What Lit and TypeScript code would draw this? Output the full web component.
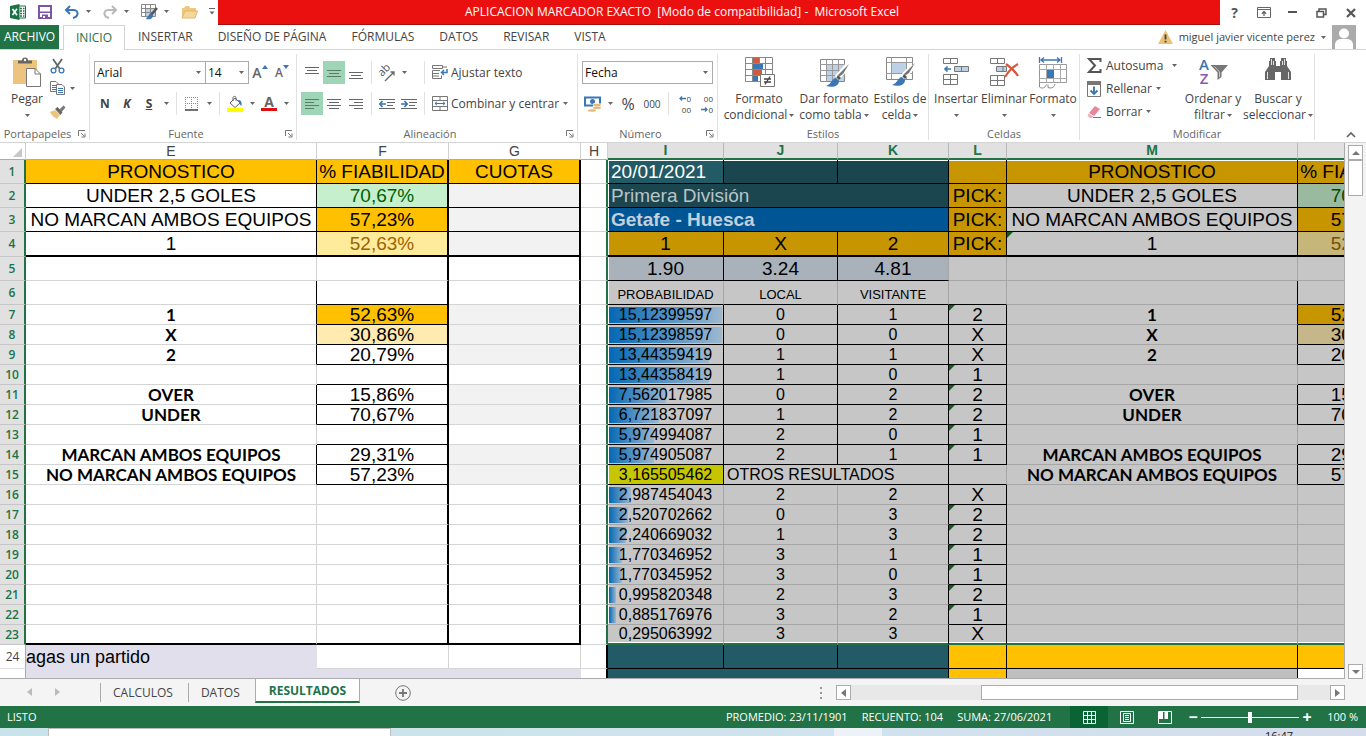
import { LitElement, html, css, svg, nothing, TemplateResult } from "lit";
import { customElement, state } from "lit/decorators.js";
import { classMap } from "lit/directives/class-map.js";
import { styleMap } from "lit/directives/style-map.js";

/* ---------- icons ---------- */
const icon = (w: number, h: number, body: unknown) =>
  html`<svg width=${w} height=${h} viewBox="0 0 ${w} ${h}" aria-hidden="true">${body}</svg>`;

const caret = icon(5, 3, svg`<path d="M0 0H5L2.5 3Z" fill="#666"/>`);

const icons = {
  excel: icon(18, 18, svg`<path d="M9 3H16.5V15H9" fill="#fff" stroke="#1e7145"/><path d="M11 5.500h2M14 5.500h1.500M11 8h2M14 8h1.500M11 10.500h2M14 10.500h1.500M11 13h2M14 13h1.500" stroke="#1e7145" stroke-width="1.400"/><path d="M1 3L10.500 1V17L1 15Z" fill="#1e7145"/><path d="M3.500 6L8 12.300M8 5.700L3.500 12" stroke="#fff" stroke-width="1.700"/>`),
  save: icon(14, 14, svg`<path d="M1 1H13V13H1Z" fill="#fff" stroke="#7f54a8" stroke-width="2"/><path d="M2 6.500H12V8H2Z" fill="#7f54a8"/><path d="M4 9.500H10V13H4Z" fill="#7f54a8"/><path d="M5 11H7V13H5Z" fill="#fff"/>`),
  undo: icon(16, 14, svg`<path d="M6 1L2 5L6 9M2.500 5H9.500C13 5 14 7.500 13.500 9.300C13 11.500 11.500 12.500 9 13" fill="none" stroke="#3b76b5" stroke-width="2"/>`),
  redo: icon(16, 14, svg`<path d="M10 1L14 5L10 9M13.500 5H6.500C3 5 2 7.500 2.500 9.300C3 11.500 4.500 12.500 7 13" fill="none" stroke="#b8b8b8" stroke-width="2"/>`),
  tableBrush: icon(18, 18, svg`<path d="M1.500 1.500H15.500V13.500H1.500Z" fill="#fff" stroke="#888"/><path d="M6 5H15V13H6Z" fill="#bcd0e6"/><path d="M1 5.500H16M1 9.500H16M5.500 1V14M10.500 1V14" stroke="#888"/><path d="M17 5L11 12" stroke="#555" stroke-width="2.500"/><path d="M11 10.500C8 11 9 14 5.500 16C9 17 13 16 13 12.500Z" fill="#3b76b5"/>`),
  folder: icon(17, 14, svg`<path d="M1 13V3H3L4.500 1H8L9 3H15V6" fill="#edc87e"/><path d="M1 13L4 6H16.500L14 13Z" fill="#f3d79c" stroke="#e3b767"/>`),
  customize: icon(6, 7, svg`<path d="M0 .5H6" stroke="#666"/><path d="M.5 3.500H5.500L3 6.500Z" fill="#666"/>`),
  ribbonOpts: icon(14, 11, svg`<path d="M.5 .5H13.500V10.500H.5ZM.5 2.500H13.500" fill="none" stroke="#666"/><path d="M7 9V5M4.800 6.700L7 4.500L9.200 6.700" fill="none" stroke="#666" stroke-width="1.300"/>`),
  minimize: icon(9, 3, svg`<path d="M0 1H9" stroke="#555" stroke-width="2"/>`),
  restore: icon(11, 10, svg`<path d="M3 3V1H10V6.500H8" fill="none" stroke="#555" stroke-width="1.500"/><path d="M1 3.500H7.500V9H1Z" fill="none" stroke="#555" stroke-width="1.500"/>`),
  close: icon(10, 10, svg`<path d="M1 1L9 9M9 1L1 9" stroke="#555" stroke-width="2.200"/>`),
  warn: icon(15, 14, svg`<path d="M7.500 0L15 14H0Z" fill="#ecc27a"/><path d="M7.500 4.500V9.500M7.500 10.800V12.500" stroke="#444" stroke-width="1.800"/>`),
  avatar: icon(24, 24, svg`<path d="M0 0H24V24H0Z" fill="#ababab"/><circle cx="12" cy="8.500" r="5" fill="#fff"/><path d="M3 24V20C3 16 6 14 9 14H15C18 14 21 16 21 20V24Z" fill="#fff"/>`),
  paste: icon(30, 30, svg`<path d="M1 3H25V27H1Z" fill="#edc47d"/><path d="M6 6.500V3.500H10C10 1.500 11 .5 13 .5S16 1.500 16 3.500H20V6.500Z" fill="#666"/><circle cx="13" cy="3" r="1.200" fill="#fff"/><path d="M14.500 11.500H23L28.500 17V29.500H14.500Z" fill="#fff" stroke="#777"/><path d="M23 11.500V17H28.500" fill="none" stroke="#777"/>`),
  cut: icon(15, 16, svg`<path d="M3 1L9.500 10.500M12 1L5.500 10.500" stroke="#666" stroke-width="1.800"/><circle cx="3.500" cy="12.500" r="2.400" fill="none" stroke="#3b76b5" stroke-width="1.300"/><circle cx="11.500" cy="12.500" r="2.400" fill="none" stroke="#3b76b5" stroke-width="1.300"/>`),
  copy: icon(16, 15, svg`<path d="M.5 .5H6L8.500 3V10.500H.5Z" fill="#fff" stroke="#777"/><path d="M2 4.500H6M2 6.500H6M2 8.500H6" stroke="#3b76b5"/><path d="M6.500 3.500H12L14.500 6V13.500H6.500Z" fill="#fff" stroke="#777"/><path d="M8 7.500H13M8 9.500H13M8 11.500H13" stroke="#3b76b5"/>`),
  brush: icon(16, 14, svg`<path d="M0 7L5 5L10 10L7 14C5 13 1 10 0 7Z" fill="#edc47d"/><path d="M5 4L7.500 2L12.500 7L10.500 10Z" fill="#666"/><path d="M9.500 4.500L13.500 .5L15.500 2.500L12 6.500Z" fill="#777"/>`),
  border: icon(14, 14, svg`<path d="M.5 0V13M6.500 0V13M12.500 0V13M0 .5H13M0 6.500H13" stroke="#888" stroke-dasharray="1 1" fill="none"/><path d="M0 13H13" stroke="#444" stroke-width="1.500"/>`),
  fill: icon(18, 16, svg`<path d="M4 7L9 2L14 7L9 11.500Z" fill="#fff" stroke="#666"/><path d="M7 5V1.500C7 0 10 0 10 1.500V5" fill="none" stroke="#666"/><path d="M12 4C15 4 16 6 15.500 10L13.500 8Z" fill="#3b76b5"/><path d="M1 12H17V16H1Z" fill="#ffff00"/>`),
  vTop: icon(14, 12, svg`<path d="M0 .5H14M2 3.500H12M0 6.500H14" stroke="#666"/>`),
  vMid: icon(14, 12, svg`<path d="M0 3.500H14M2 6.500H12M0 9.500H14" stroke="#5c7a6a"/>`),
  vBot: icon(14, 12, svg`<path d="M0 5.500H14M2 8.500H12M0 11.500H14" stroke="#666"/>`),
  hLeft: icon(14, 12, svg`<path d="M0 1.500H14M0 4.500H9M0 7.500H14M0 10.500H9" stroke="#5c7a6a"/>`),
  hMid: icon(14, 12, svg`<path d="M0 1.500H14M2 4.500H12M0 7.500H14M2 10.500H12" stroke="#666"/>`),
  hRight: icon(14, 12, svg`<path d="M0 1.500H14M5 4.500H14M0 7.500H14M5 10.500H14" stroke="#666"/>`),
  orient: icon(20, 18, svg`<text transform="translate(5 13) rotate(-45)" font-size="11" fill="#555">ab</text><path d="M8 17L17 8M13.500 8H17V11.500" fill="none" stroke="#666" stroke-width="1.300"/>`),
  outdent: icon(16, 12, svg`<path d="M0 1.500H16M8 4.500H16M8 7.500H14M0 10.500H16" stroke="#666"/><path d="M7 6H1M3.500 3L.8 6L3.500 9" fill="none" stroke="#3b76b5" stroke-width="1.700"/>`),
  indent: icon(16, 12, svg`<path d="M0 1.500H16M8 4.500H16M8 7.500H14M0 10.500H16" stroke="#666"/><path d="M0 6H6M3.500 3L6.200 6L3.500 9" fill="none" stroke="#3b76b5" stroke-width="1.700"/>`),
  wrap: icon(16, 15, svg`<path d="M.5 .5H10.500V3.500H.5ZM.5 5.500H8M.5 5.500V13.500H9.500V10.500M.5 8.500H7M.5 11H7" fill="none" stroke="#777"/><path d="M10 2H15" stroke="#777"/><path d="M15 4V7.500H10M12 5L9.500 7.500L12 10" fill="none" stroke="#3b76b5" stroke-width="1.500"/>`),
  merge: icon(16, 15, svg`<path d="M.5 .5H15.500V14.500H.5ZM.5 4.500H15.500M.5 10.500H15.500M8 .5V4.500M8 10.500V14.500" fill="none" stroke="#777"/><path d="M3 7.500H13M5 5.800L3 7.500L5 9.200M11 5.800L13 7.500L11 9.200" fill="none" stroke="#3b76b5"/>`),
  arrowUp: icon(6, 4, svg`<path d="M0 4L3 0L6 4Z" fill="#3b76b5"/>`),
  arrowDown: icon(6, 4, svg`<path d="M0 0H6L3 4Z" fill="#3b76b5"/>`),
  currency: icon(18, 16, svg`<path d="M1 1.500H16V9.500H1Z" fill="#fff" stroke="#3b76b5" stroke-width="2"/><circle cx="8.500" cy="5.500" r="2.500" fill="#3b76b5"/><path d="M9 7.500H18V16H3V12H9Z" fill="#fff"/><ellipse cx="13" cy="9" rx="4" ry="1.200" fill="#e8b96f"/><ellipse cx="13" cy="11.700" rx="4" ry="1.200" fill="#e8b96f"/><ellipse cx="8" cy="14.500" rx="4" ry="1.200" fill="#e8b96f"/>`),
  arrowL: icon(7, 5, svg`<path d="M7 2.500H1M3 .5L1 2.500L3 4.500" fill="none" stroke="#3b76b5" stroke-width="1.300"/>`),
  arrowR: icon(7, 5, svg`<path d="M0 2.500H6M4 .5L6 2.500L4 4.500" fill="none" stroke="#3b76b5" stroke-width="1.300"/>`),
  cond: icon(31, 30, svg`<path d="M1.500 .5H28.500V24.500H1.500Z" fill="#fff" stroke="#888"/><path d="M9 1H15V6H9ZM9 13H18V18H9Z" fill="#d05a3c"/><path d="M9 7H19V12H9ZM9 19H14V24H9Z" fill="#3b76b5"/><path d="M1.500 6.500H28.500M1.500 12.500H28.500M1.500 18.500H28.500M8.500 .5V24.500M15.500 .5V6M21.500 .5V24" fill="none" stroke="#888"/><path d="M16.500 17.500H30.500V29.500H16.500Z" fill="#fff" stroke="#777"/><path d="M20 22H27M20 25H27M26 19.500L21 27.500" stroke="#444" stroke-width="1.300"/>`),
  asTable: icon(30, 30, svg`<path d="M1.500 2.500H25.500V24.500H1.500Z" fill="#fff" stroke="#888"/><path d="M8 8H25V24H8Z" fill="#bcd0e6"/><path d="M1 7.500H26M1 13.500H26M1 18.500H26M7.500 2V25M13.500 2V25M19.500 2V25" stroke="#999"/><path d="M28.500 9L18 21" stroke="#fff" stroke-width="6"/><path d="M30 7L24 17L20.500 19.500L19 18Z" fill="#777"/><path d="M19 18L22 21L20 23L17.500 20.500Z" fill="#555"/><path d="M17 21C13 21 13 27 7 29C14 31 20 29 20 24Z" fill="#3b76b5"/>`),
  cellStyle: icon(30, 30, svg`<path d="M1.500 .5H27.500V22.500H1.500Z" fill="#fff" stroke="#888"/><path d="M7 6H21V16H7Z" fill="#bcd0e6"/><path d="M1 5.500H28M1 16.500H28M6.500 .5V22M21.500 .5V22" stroke="#999"/><path d="M28.500 9L18 20" stroke="#fff" stroke-width="6"/><path d="M30 6L24 16L20.500 18.500L19 17Z" fill="#777"/><path d="M19 17L22 20L20 22L17.500 19.500Z" fill="#555"/><path d="M17 20C13 20 13 26 7 28C14 30 20 28 20 23Z" fill="#3b76b5"/>`),
  insertCell: icon(28, 30, svg`<path d="M1.500 1.500H15.500V6.500H1.500ZM8.500 1.500V6.500M1.500 17.500H15.500V27.500H1.500ZM1.500 22.500H15.500M8.500 17.500V27.500" fill="#fff" stroke="#777"/><path d="M12.500 9.500H26.500V14.500H12.500ZM19.500 9.500V14.500" fill="#bcd0e6" stroke="#777"/><path d="M9 12H3M5.500 9.500L3 12L5.500 14.500" fill="none" stroke="#3b76b5" stroke-width="1.700"/>`),
  deleteCell: icon(30, 30, svg`<path d="M1.500 1.500H15.500V6.500H1.500ZM8.500 1.500V6.500M1.500 18.500H15.500V28.500H1.500ZM1.500 23.500H15.500M8.500 18.500V28.500" fill="#fff" stroke="#777"/><path d="M7.500 9.500H17.500V14.500H7.500ZM14 9.500V14.500" fill="#bcd0e6" stroke="#777"/><path d="M17 7C21 10 26 14 29 19M29 7C24 10 19 15 16 20" fill="none" stroke="#d8583c" stroke-width="2.200"/>`),
  formatCell: icon(30, 32, svg`<path d="M1.500 0V6M23.500 0V6M3 3H22M6 .5L3 3L6 5.500M19 .5L22 3L19 5.500" fill="none" stroke="#3b76b5" stroke-width="1.300"/><path d="M1.500 7.500H28.500V25.500H1.500Z" fill="#fff" stroke="#999"/><path d="M1 12.500H29M1 21.500H29M8.500 7V26M15.500 7V26M22.500 7V26" stroke="#aaa"/><path d="M9 13H16V21H9Z" fill="#3b76b5"/><path d="M1.500 25.500V30C4 32 7 31 8.500 27.500M10 27.500V30.500C13 31.500 16 31 17 27" fill="none" stroke="#888"/>`),
  sigma: icon(15, 15, svg`<path d="M13.500 4V1H2L8 7.500L2 14H13.500V11" fill="none" stroke="#555" stroke-width="2"/>`),
  fillDown: icon(15, 16, svg`<path d="M.5 .5H13.500V15.500H.5Z" fill="#fff" stroke="#777"/><path d="M0 0H14V4H0Z" fill="#777"/><path d="M7 5.500V13M3.500 9.500L7 13L10.500 9.500" fill="none" stroke="#3b76b5" stroke-width="1.900"/>`),
  eraser: icon(15, 14, svg`<path d="M8 1L13 4L7 11L2 8Z" fill="#e8879b"/><path d="M1.500 8.500L6.500 11.500L5 13H3L.5 11Z" fill="#efb2bd"/><path d="M6 12.500H14" stroke="#777"/>`),
  sort: icon(30, 28, svg`<path d="M12.500 8H30L23.500 15.500V20L19.500 23V15.500Z" fill="#777"/><path d="M16.500 9.500L21.500 15V20" fill="none" stroke="#c4c4c4"/>`),
  find: icon(26, 24, svg`<path d="M5 1H10V4H11V9H15V4H16V1H21V4H22V9L26 15V23H16V15H10V23H0V15L4 9V4H5Z" fill="#666"/><path d="M6.500 2V8M8.500 4V8M17.500 4V8M19.500 2V8M2.500 15V22M23.500 15V22" stroke="#fff" stroke-width=".8"/>`),
  launcher: icon(8, 8, svg`<path d="M.5 6V.5H7" fill="none" stroke="#777"/><path d="M3 3L6 6M7 3.500V7H3.500" fill="none" stroke="#777"/>`),
  chevronUp: icon(10, 7, svg`<path d="M1 6L5 2L9 6" fill="none" stroke="#666" stroke-width="1.700"/>`),
  triL: icon(5, 8, svg`<path d="M5 0V8L0 4Z" fill="currentColor"/>`),
  triR: icon(5, 8, svg`<path d="M0 0V8L5 4Z" fill="currentColor"/>`),
  triU: icon(8, 4, svg`<path d="M0 4H8L4 0Z" fill="currentColor"/>`),
  triD: icon(8, 4, svg`<path d="M0 0H8L4 4Z" fill="currentColor"/>`),
  plus: icon(16, 16, svg`<circle cx="8" cy="8" r="7.300" fill="none" stroke="#777"/><path d="M8 4V12M4 8H12" stroke="#777" stroke-width="1.800"/>`),
  viewGrid: icon(13, 13, svg`<path d="M.5 .5H12.500V12.500H.5ZM.5 4.500H12.500M.5 8.500H12.500M4.500 .5V12.500M8.500 .5V12.500" fill="none" stroke="#fff"/>`),
  viewPage: icon(14, 13, svg`<path d="M.5 .5H13.500V12.500H.5ZM3.500 2.500H10.500V10.500H3.500ZM5 4.500H9M5 6.500H9M5 8.500H9" fill="none" stroke="#fff"/>`),
  viewBreak: icon(14, 13, svg`<path d="M.5 .5H13.500V12.500H.5Z" fill="none" stroke="#fff"/><path d="M1 1H5V8H1ZM6.500 1H10V8H6.500Z" fill="#fff"/>`),
};

/* ---------- sheet data ---------- */
interface Cell { t?: string; k?: string; span?: number; bar?: number; flag?: boolean }

const HEADS: [string, string][] = [
  ["E", ""], ["F", ""], ["G", ""], ["H", ""],
  ["I", "sel"], ["J", "sel"], ["K", "sel"], ["L", "sel"], ["M", "sel"], ["", "sel"],
];

const FORECAST: Record<number, [string, string, string, string]> = {
  1: ["PRONOSTICO", "% FIABILIDAD", "gold", "goldS"],
  2: ["UNDER 2,5 GOLES", "70,67%", "green", "greenS"],
  3: ["NO MARCAN AMBOS EQUIPOS", "57,23%", "gold", "goldS"],
  4: ["1", "52,63%", "amber", "amberS"],
  7: ["1", "52,63%", "gold", "goldS"],
  8: ["X", "30,86%", "cream", "creamS"],
  9: ["2", "20,79%", "", "s"],
  11: ["OVER", "15,86%", "", "s"],
  12: ["UNDER", "70,67%", "", "s"],
  14: ["MARCAN AMBOS EQUIPOS", "29,31%", "", "s"],
  15: ["NO MARCAN AMBOS EQUIPOS", "57,23%", "", "s"],
};

/* value, home goals, away goals, result, error flag */
const SCORES: Record<number, [string, string, string, string, boolean]> = {
  7: ["15,12399597", "0", "1", "2", true],
  8: ["15,12398597", "0", "0", "X", false],
  9: ["13,44359419", "1", "1", "X", false],
  10: ["13,44358419", "1", "0", "1", true],
  11: ["7,562017985", "0", "2", "2", true],
  12: ["6,721837097", "1", "2", "2", true],
  13: ["5,974994087", "2", "0", "1", true],
  14: ["5,974905087", "2", "1", "1", true],
  16: ["2,987454043", "2", "2", "X", false],
  17: ["2,520702662", "0", "3", "2", true],
  18: ["2,240669032", "1", "3", "2", true],
  19: ["1,770346952", "3", "1", "1", true],
  20: ["1,770345952", "3", "0", "1", true],
  21: ["0,995820348", "2", "3", "2", true],
  22: ["0,885176976", "3", "2", "1", true],
  23: ["0,295063992", "3", "3", "X", false],
};
const MAX = 15.12399597;

function labelPair(r: number, selected: boolean): Cell[] {
  const f = FORECAST[r];
  const head = r <= 4;
  const base = selected ? "s" : "";
  const last = r === 4 ? "bbt" : "bb";
  const side = head || f || r === 6 ? "br" : "";
  const labelKind = head ? (r === 1 ? (selected ? "goldS" : "gold") : base) : `${base} cal`;
  const nextBoxed = [6, 7, 8, 9, 10, 11, 12, 13, 14, 15].includes(r);
  return [
    { t: f?.[0], k: `${labelKind} ${side} ${head ? last : ""}`, flag: selected && r === 4 },
    { t: f?.[1], k: `${f ? f[selected ? 3 : 2] : base} ${head ? last : nextBoxed ? "bb" : ""} ${head ? "" : "low"} brt` },
  ];
}

function buildRow(r: number): Cell[] {
  if (r === 24) {
    return [
      { t: "agas un partido", k: "lilac" }, {}, {}, { k: "brt" },
      { k: "teal br bb" }, { k: "teal br bb" }, { k: "teal br bb" },
      { k: "gold br bb" }, { k: "gold br bb" }, { k: "gold br bb" },
    ];
  }
  if (r === 25) {
    return [{ k: "lilac", span: 3 }, { k: "brt" }, { k: "teal br", span: 3 }, { k: "gold br" }, { k: "silver br" }, {}];
  }
  const left = labelPair(r, false);
  const shaded = FORECAST[r] && r !== 1;
  const g: Cell = {
    t: r === 1 ? "CUOTAS" : undefined,
    k: `${r === 1 ? "gold" : shaded ? "pale" : ""} ${r < 4 ? "bb" : r === 4 ? "bbt" : ""} brt`,
  };
  const h: Cell = { k: "edge" };
  let mid: Cell[];
  if (r === 1) mid = [{ t: "20/01/2021", k: "active left br bb" }, { k: "tealS br bb" }, { k: "tealS br bb" }, { k: "goldS br bb" }];
  else if (r === 2) mid = [{ t: "Primera División", k: "tealS left br bb", span: 3 }, { t: "PICK:", k: "goldS br bb" }];
  else if (r === 3) mid = [{ t: "Getafe - Huesca", k: "blueS left br bb", span: 3 }, { t: "PICK:", k: "goldS br bb" }];
  else if (r === 4) mid = [..."1X2"].map((t): Cell => ({ t, k: "goldS br bbt" })).concat({ t: "PICK:", k: "goldS br bbt" });
  else if (r === 5) mid = [{ t: "1.90", k: "slate br bb" }, { t: "3.24", k: "slate br bb" }, { t: "4.81", k: "slate bb" }, { k: "s" }];
  else if (r === 6) mid = ["PROBABILIDAD", "LOCAL", "VISITANTE"].map((t): Cell => ({ t, k: "s small bb" })).concat({ k: "s bb" });
  else if (r === 15) mid = [{ t: "3,165505462", k: "lime mid br bb" }, { t: "OTROS RESULTADOS", k: "s mid left br bb", span: 2 }, { k: "s bb" }];
  else {
    const [v, a, b, res, flag] = SCORES[r];
    const edge = r < 15 ? "br bb" : "";
    mid = [
      { t: v, k: `s mid ${edge}`, bar: (parseFloat(v.replace(",", ".")) / MAX) * 100 },
      { t: a, k: `s mid ${edge}` }, { t: b, k: `s mid br ${edge}` },
      { t: res, k: "s low br bb", flag },
    ];
  }
  return [...left, g, h, ...mid, ...labelPair(r, true)];
}

const ROWS = Array.from({ length: 25 }, (_, i) => ({ n: i + 1, cells: buildRow(i + 1) }));

@customElement("app-root")
export class AppRoot extends LitElement {
  @state() private sheet = "RESULTADOS";

  static styles = css`
    :host { display: flex; flex-direction: column; height: 100vh; overflow: hidden; background: #fff; color: #444; font: 12px/16px "Open Sans", "Noto Sans", sans-serif; }
    * { box-sizing: border-box; }
    svg { display: block; flex: none; overflow: visible; }
    button, select { font: inherit; color: inherit; background: none; border: 0; padding: 0; margin: 0; }
    button { display: flex; align-items: center; justify-content: center; white-space: nowrap; }
    a { color: inherit; text-decoration: none; }

    .title { display: flex; height: 25px; flex: none; }
    .quick { display: flex; align-items: center; width: 218px; padding: 0 3px 2px 9px; justify-content: space-between; flex: none; }
    .quick .wide { gap: 6px; }
    .name { flex: 1; min-width: 0; background: #ea1010; border-bottom: 1px solid #a31010; color: #fff; display: flex; align-items: center; justify-content: center; padding-right: 74px; white-space: pre; }
    .name h1 { font: inherit; margin: 0; }
    .win { display: flex; align-items: center; width: 146px; flex: none; }
    .win button { width: 29px; height: 24px; }
    .help { font-size: 14px; font-weight: 700; color: #555; }

    .tabs { display: flex; height: 25px; flex: none; align-items: stretch; border-bottom: 1px solid #d4d4d4; }
    .tabs a { display: flex; align-items: center; padding: 0 12px 0 13px; white-space: nowrap; font-size: 12px; }
    .tabs .file { background: #217346; color: #fff; padding: 0; width: 59px; justify-content: center; margin-right: 4px; }
    .tabs .on { border: 1px solid #d4d4d4; border-bottom: 0; background: #fff; color: #217346; width: 62px; padding: 0; justify-content: center; height: 25px; }
    .user { margin-left: auto; display: flex; align-items: center; gap: 6px; padding-right: 10px; white-space: nowrap; font-size: 11px; }

    .ribbon { display: flex; height: 93px; flex: none; border-bottom: 1px solid #d4d4d4; }
    .group { display: flex; flex-direction: column; border-right: 1px solid #e1e1e1; margin: 4px 0 2px; flex: none; }
    .body { flex: 1; display: flex; }
    .foot { height: 12px; display: flex; align-items: center; color: #666; font-size: 11px; line-height: 12px; }
    .foot span { flex: 1; text-align: center; }
    .foot button { width: 14px; height: 12px; }
    .g1 { width: 90px; } .g2 { width: 207px; } .g3 { width: 281px; } .g4 { width: 140px; }
    .g5 { width: 211px; } .g6 { width: 151px; } .g7 { width: 235px; }
    .fold { margin-left: auto; padding: 0 10px 4px 0; align-self: flex-end; }

    .rows { display: flex; flex-direction: column; gap: 8px; padding: 7px 0 0 4px; }
    .row { display: flex; height: 23px; align-items: stretch; }
    .b { width: 22px; }
    .c { width: 12px; }
    .on2 { background: #9fd5b7; }
    .v { width: 1px; background: #e1e1e1; margin: 0 4px; }
    .gap { width: 10px; }
    .bold { font-weight: 700; } .ital { font-style: italic; font-weight: 700; } .und { text-decoration: underline; font-weight: 700; }
    .fontA { flex-direction: column; font-weight: 700; font-size: 14px; line-height: 12px; color: #666; }
    .fontA i { display: block; width: 16px; height: 3px; background: #e01010; }
    .grow { align-items: center; font-size: 14px; font-weight: 600; color: #666; }
    .grow svg { align-self: flex-start; margin-top: 4px; }
    .shrink { font-size: 12px; }
    .zeros { font-size: 10px; width: 24px; }
    .pct { font-size: 16px; width: 24px; }
    .dec { flex-direction: column; font-size: 8px; line-height: 11px; align-items: flex-end; padding-right: 4px; }
    .dec span { display: flex; align-items: center; }
    .pick { display: grid; border: 1px solid #ababab; height: 23px; color: #111; }
    .pick > * { grid-area: 1 / 1; }
    .pick select { appearance: none; padding: 0 0 0 2px; width: 100%; border-radius: 0; }
    .pick svg { justify-self: end; align-self: center; margin-right: 4px; pointer-events: none; }
    .w1 { width: 112px; } .w2 { width: 43px; border-left: 0; } .w3 { width: 131px; }

    .big { flex-direction: column; justify-content: flex-start; padding-top: 3px; height: 70px; }
    .big .pic { height: 34px; display: flex; align-items: flex-start; }
    .big .ln { display: flex; align-items: center; gap: 2px; height: 16px; }
    .x1 { width: 74px; } .x2 { width: 76px; } .x3 { width: 56px; } .x4 { width: 48px; } .x5 { width: 50px; } .x6 { width: 60px; } .x7 { width: 70px; } .x0 { width: 46px; margin-left: 4px; }
    .pad { padding-left: 4px; } .pad2 { padding-left: 3px; }
    .stack { display: flex; flex-direction: column; }
    .stack button { height: 23px; justify-content: flex-start; gap: 4px; }
    .s1 { width: 34px; } .s7 { width: 96px; }
    .s7 .far { margin-left: 5px; }
    .az { display: grid; justify-items: start; }
    .az > * { grid-area: 1 / 1; }
    .az b { display: block; font-size: 15px; line-height: 14px; width: 12px; text-align: center; font-weight: 600; }
    .az .a { color: #3b76b5; } .az .z { color: #8858b0; }

    .sheet { flex: 1; display: flex; min-height: 0; }
    .view { flex: 1; min-width: 0; overflow: hidden; border-right: 1px solid #ababab; border-bottom: 1px solid #ababab; }
    table { border-collapse: separate; border-spacing: 0; table-layout: fixed; width: 1430px; font-family: "Liberation Sans", Arial, sans-serif; color: #000; }
    .k0 { width: 26px; } .kE { width: 291px; } .kF { width: 132px; } .kH { width: 27px; } .kI { width: 116px; } .kJ { width: 114px; } .kK { width: 111px; } .kL { width: 58px; }
    th, td { padding: 0; overflow: hidden; white-space: nowrap; text-align: center; vertical-align: middle; }
    thead tr { height: 17px; }
    thead th { font-size: 14px; font-weight: 400; line-height: 15px; color: #444; border-right: 1px solid #d0d0d0; border-bottom: 1px solid #ababab; }
    thead .sel { background: #e1e1e1; color: #217346; font-weight: 700; border-right-color: #b8b8b8; border-bottom: 2px solid #217346; }
    .corner svg { margin: 2px 0 0 13px; }
    tbody tr { height: 20px; }
    tbody .tall { height: 24px; }
    tbody .tall4 { height: 25px; }
    tbody th { font: 600 12px/18px "Open Sans", "Noto Sans", sans-serif; color: #217346; background: #e1e1e1; border-right: 2px solid #217346; border-bottom: 1px solid #c6c6c6; }
    tbody .off { background: #fff; color: #444; font-weight: 400; border-right: 1px solid #ababab; border-bottom-color: #e1e1e1; }
    td { font-size: 19px; line-height: 18px; border-right: 1px solid #d4d4d4; border-bottom: 1px solid #d4d4d4; position: relative; }
    .low { vertical-align: bottom; }
    .left { text-align: left; padding-left: 3px; }
    .mid { font-size: 16px; }
    .small { font-size: 13px; }
    .tall .small { vertical-align: bottom; }
    .cal { font-family: Lato, sans-serif; font-size: 17px; font-weight: 700; }
    .s { background: #c6c6c6; border-color: #a6a6a6; }
    .gold { background: #ffc000; } .goldS { background: #c69500; }
    .green { background: #c6efce; color: #006100; } .greenS { background: #9abaa0; color: #004b00; }
    .amber { background: #ffeb9c; color: #9c6500; } .amberS { background: #c6b679; color: #7a4f00; }
    .cream { background: #ffebb0; } .creamS { background: #c6b78a; }
    .pale { background: #f2f2f2; } .lilac { background: #e2dfec; border-color: #e2dfec; font-size: 18px; text-align: left; }
    .teal { background: #225a66; } .tealS { background: #1b4650; color: #b8c4c7; }
    .active { background: #225a66; color: #fff; }
    .blueS { background: #005695; color: #c3d0dc; font-weight: 700; }
    .slate { background: #a9b2bb; border-color: #a6a6a6; } .lime { background: #c6c600; } .silver { background: #bfbfbf; }
    .br { border-right: 1px solid #000; } .bb { border-bottom: 1px solid #000; }
    .brt { border-right: 2px solid #000; } .bbt { border-bottom: 2px solid #000; }
    .edge { border-right: 2px solid #217346; }
    .edge + td { box-shadow: inset 1px 0 #fff; }
    .first td:nth-child(n + 6) { box-shadow: inset 0 1px #fff; }
    .first .edge + td:nth-child(n + 6) { box-shadow: inset 1px 1px #fff; }
    .last td { border-bottom: 2px solid #000; }
    .last td.s { border-bottom-color: #217346; box-shadow: inset 0 -1px #fff; }
    .last td.edge { border-bottom: 1px solid #d4d4d4; }
    .barred { display: grid; align-items: center; }
    .barred > * { grid-area: 1 / 1; }
    .track { padding: 0 1px; }
    .bar { height: 16px; background: linear-gradient(90deg, #0468b4, #9db8d0); }
    .flag { position: absolute; left: 0; top: 0; border-top: 6px solid #106018; border-right: 6px solid transparent; }

    .vbar { width: 21px; flex: none; background: #f3f3f3; display: flex; flex-direction: column; align-items: center; padding-top: 2px; }
    .sb { width: 15px; height: 15px; border: 1px solid #ababab; background: #fff; color: #777; flex: none; }
    .vthumb { width: 15px; height: 36px; border: 1px solid #ababab; background: #fff; }
    .vtrack { flex: 1; }

    .bottom { height: 27px; flex: none; display: flex; background: #f4f4f4; color: #444; }
    .nav { width: 100px; display: flex; align-items: center; gap: 23px; padding: 0 0 2px 27px; color: #bbb; }
    .sheets { display: flex; }
    .sheets button { padding: 0 15px 0 12px; height: 19px; margin-top: 4px; border-left: 1px solid #ababab; }
    .sheets .cur { background: #fff; color: #217346; font-weight: 700; height: 24px; margin: 0; border: 1px solid #ababab; border-top: 0; border-bottom: 2px solid #217346; padding: 2px 13px 0; }
    .add { margin: 0 0 0 35px; }
    .hbar { margin-left: auto; display: flex; align-items: center; width: 546px; padding: 0 21px 0 0; }
    .dots { width: 14px; height: 12px; display: flex; flex-direction: column; justify-content: space-between; margin-right: 2px; }
    .dots i { width: 2px; height: 2px; background: #999; }
    .htrack { flex: 1; height: 15px; background: #e8e8e8; display: flex; justify-content: flex-end; padding-right: 32px; }
    .hthumb { width: 71%; border: 1px solid #ababab; background: #fff; }

    .status { height: 22px; flex: none; background: #217346; color: #fff; display: flex; align-items: center; padding: 0 8px 0 7px; font-size: 11px; white-space: nowrap; }
    .sums { margin-left: auto; display: flex; gap: 14px; padding-right: 18px; }
    .views { display: flex; align-self: stretch; }
    .views button { width: 38px; }
    .views .now { background: #0a6332; }
    .zoom { display: flex; align-items: center; gap: 4px; padding-left: 5px; }
    .zoom button { font-size: 16px; font-weight: 700; width: 8px; height: 22px; }
    .zoom input { appearance: none; width: 98px; height: 12px; margin: 0; background: linear-gradient(#fff, #fff) center / 100% 1px no-repeat; }
    .zoom input::-webkit-slider-thumb { appearance: none; width: 4px; height: 11px; background: #fff; border-radius: 0; }
    .zoom output { padding-left: 12px; }
    .task { height: 8px; flex: none; overflow: hidden; background: linear-gradient(90deg, #c9e3ea, #d0e3ee 60%, #d5dcec); display: flex; color: #222; }
    .search { width: 343px; margin-left: 48px; background: #fff; border: 1px solid #bbb; border-bottom: 0; }
    .app { width: 48px; margin-left: 443px; background: #edf1f8; }
    .clock { margin-left: auto; padding: 0 73px 0 0; font-size: 11px; line-height: 16px; }
  `;

  private btn(label: string, body: unknown, cls = "b") {
    return html`<button class=${cls} aria-label=${label}>${body}</button>`;
  }
  private more(label: string, cls = "c") {
    return this.btn("Más opciones de " + label, caret, cls);
  }
  private group(cls: string, name: string, body: TemplateResult, launcher = false) {
    return html`<section class="group ${cls}" aria-label=${name}>
      <div class="body">${body}</div>
      <div class="foot"><span>${name}</span>${launcher ? this.btn("Opciones de " + name, icons.launcher, "") : nothing}</div>
    </section>`;
  }
  private big(cls: string, pic: unknown, l1: string, l2 = "") {
    return html`<button class="big ${cls}"><span class="pic">${pic}</span><span class="ln">${l1}</span><span class="ln">${l2}${caret}</span></button>`;
  }
  private choose(cls: string, label: string, value: string) {
    return html`<span class="pick ${cls}"><select aria-label=${label}><option>${value}</option></select>${caret}</span>`;
  }

  private ribbon() {
    const v = html`<span class="v"></span>`;
    return html`<div class="ribbon">
      ${this.group("g1", "Portapapeles", html`
        ${this.big("x0", icons.paste, "Pegar")}
        <div class="stack s1">
          <button aria-label="Cortar">${icons.cut}</button>
          <button aria-label="Copiar">${icons.copy}${caret}</button>
          <button aria-label="Copiar formato">${icons.brush}</button>
        </div>`, true)}
      ${this.group("g2", "Fuente", html`<div class="rows">
        <div class="row">${this.choose("w1", "Fuente", "Arial")}${this.choose("w2", "Tamaño", "14")}
          ${this.btn("Aumentar tamaño", html`A${icons.arrowUp}`, "b grow")}${this.btn("Disminuir tamaño", html`A${icons.arrowDown}`, "b grow shrink")}</div>
        <div class="row">
          <button class="b bold">N</button><button class="b ital">K</button><button class="b und">S</button>${this.more("subrayado")}${v}
          ${this.btn("Bordes", icons.border)}${this.more("bordes")}${v}
          ${this.btn("Color de relleno", icons.fill)}${this.more("relleno")}
          ${this.btn("Color de fuente", html`A<i></i>`, "b fontA")}${this.more("color")}
        </div></div>`, true)}
      ${this.group("g3", "Alineación", html`<div class="rows">
        <div class="row">${this.btn("Alinear arriba", icons.vTop)}${this.btn("Alinear en el medio", icons.vMid, "b on2")}${this.btn("Alinear abajo", icons.vBot)}${v}
          ${this.btn("Orientación", icons.orient)}${this.more("orientación")}<span class="gap"></span>${v}
          ${this.btn("Ajustar", icons.wrap)}<button>Ajustar texto</button></div>
        <div class="row">${this.btn("Izquierda", icons.hLeft, "b on2")}${this.btn("Centrar", icons.hMid)}${this.btn("Derecha", icons.hRight)}${v}
          ${this.btn("Disminuir sangría", icons.outdent)}${this.btn("Aumentar sangría", icons.indent)}${v}
          ${this.btn("Combinar", icons.merge)}<button>Combinar y centrar</button>${this.more("combinar")}</div>
        </div>`, true)}
      ${this.group("g4", "Número", html`<div class="rows">
        <div class="row">${this.choose("w3", "Formato de número", "Fecha")}</div>
        <div class="row">${this.btn("Moneda", icons.currency)}${this.more("moneda")}<button class="pct">%</button><button class="zeros">000</button>${v}
          ${this.btn("Aumentar decimales", html`<span>${icons.arrowL}0</span><span>00</span>`, "b dec")}${this.btn("Disminuir decimales", html`<span>00</span><span>${icons.arrowR}0</span>`, "b dec")}</div>
        </div>`, true)}
      ${this.group("g5", "Estilos", html`<span class="pad"></span>${this.big("x1", icons.cond, "Formato", "condicional")}${this.big("x2", icons.asTable, "Dar formato", "como tabla")}${this.big("x3", icons.cellStyle, "Estilos de", "celda")}`)}
      ${this.group("g6", "Celdas", html`<span class="pad2"></span>${this.big("x4", icons.insertCell, "Insertar")}${this.big("x4", icons.deleteCell, "Eliminar")}${this.big("x5", icons.formatCell, "Formato")}`)}
      ${this.group("g7", "Modificar", html`<span class="pad"></span><span class="pad2"></span>
        <div class="stack s7">
          <button>${icons.sigma}Autosuma<span class="far">${caret}</span></button>
          <button>${icons.fillDown}Rellenar${caret}</button>
          <button>${icons.eraser}Borrar${caret}</button>
        </div>
        ${this.big("x6", html`<span class="az">${icons.sort}<span><b class="a">A</b><b class="z">Z</b></span></span>`, "Ordenar y", "filtrar")}
        ${this.big("x7", icons.find, "Buscar y", "seleccionar")}`)}
      ${this.btn("Contraer la cinta", icons.chevronUp, "fold")}
    </div>`;
  }

  private cell(c: Cell) {
    return html`<td class=${c.k ?? ""} colspan=${c.span ?? 1}>${c.flag ? html`<span class="flag"></span>` : nothing}${c.bar
      ? html`<div class="barred"><div class="track"><div class="bar" style=${styleMap({ width: c.bar < 3 ? "0" : `${c.bar}%` })}></div></div><span>${c.t}</span></div>`
      : c.t ?? nothing}</td>`;
  }

  render() {
    return html`
      <header class="title">
        <div class="quick">
          ${this.btn("Excel", icons.excel, "")}${this.btn("Guardar", icons.save, "")}
          ${this.btn("Deshacer", html`${icons.undo}${caret}`, "wide")}${this.btn("Rehacer", html`${icons.redo}${caret}`, "wide")}
          ${this.btn("Dar formato", html`${icons.tableBrush}${caret}`, "wide")}${this.btn("Abrir", icons.folder, "")}${this.btn("Personalizar", icons.customize, "")}
        </div>
        <div class="name"><h1>APLICACION MARCADOR EXACTO  [Modo de compatibilidad] -  Microsoft Excel</h1></div>
        <div class="win"><button class="help" aria-label="Ayuda">?</button>${this.btn("Opciones de cinta", icons.ribbonOpts)}${this.btn("Minimizar", icons.minimize)}${this.btn("Restaurar", icons.restore)}${this.btn("Cerrar", icons.close)}</div>
      </header>
      <nav class="tabs">
        <a class="file" href="#">ARCHIVO</a><a class="on" href="#">INICIO</a>
        ${["INSERTAR", "DISEÑO DE PÁGINA", "FÓRMULAS", "DATOS", "REVISAR", "VISTA"].map((t) => html`<a href="#">${t}</a>`)}
        <div class="user">${icons.warn}<span>miguel javier vicente perez</span>${caret}${icons.avatar}</div>
      </nav>
      ${this.ribbon()}
      <main class="sheet">
        <div class="view">
          <table>
            <colgroup><col class="k0"><col class="kE"><col class="kF"><col class="kF"><col class="kH"><col class="kI"><col class="kJ"><col class="kK"><col class="kL"><col class="kE"><col class="kF"></colgroup>
            <thead><tr><th class="corner">${icon(9, 9, svg`<path d="M9 0V9H0Z" fill="#c8c8c8"/>`)}</th>${HEADS.map(([t, k]) => html`<th class=${k}>${t}</th>`)}</tr></thead>
            <tbody>
              ${ROWS.map(({ n, cells }) => html`<tr class=${classMap({ tall: (n < 7 && n !== 4) || n > 23, tall4: n === 4, first: n === 1, last: n === 23 })}>
                <th class=${n > 23 ? "off" : ""}>${n < 25 ? n : ""}</th>${cells.map((c) => this.cell(c))}</tr>`)}
            </tbody>
          </table>
        </div>
        <div class="vbar">${this.btn("Subir", icons.triU, "sb")}<div class="vthumb"></div><div class="vtrack"></div>${this.btn("Bajar", icons.triD, "sb")}</div>
      </main>
      <div class="bottom">
        <div class="nav">${this.btn("Hoja anterior", icons.triL, "")}${this.btn("Hoja siguiente", icons.triR, "")}</div>
        <div class="sheets">${["CALCULOS", "DATOS", "RESULTADOS"].map((s) => html`<button class=${s === this.sheet ? "cur" : ""} @click=${() => (this.sheet = s)}>${s}</button>`)}</div>
        ${this.btn("Hoja nueva", icons.plus, "add")}
        <div class="hbar"><div class="dots"><i></i><i></i><i></i></div>${this.btn("Izquierda", icons.triL, "sb")}<div class="htrack"><div class="hthumb"></div></div>${this.btn("Derecha", icons.triR, "sb")}</div>
      </div>
      <footer class="status">
        <span>LISTO</span>
        <div class="sums"><span>PROMEDIO: 23/11/1901</span><span>RECUENTO: 104</span><span>SUMA: 27/06/2021</span></div>
        <div class="views">${this.btn("Normal", icons.viewGrid, "now")}${this.btn("Diseño de página", icons.viewPage, "")}${this.btn("Salto de página", icons.viewBreak, "")}</div>
        <div class="zoom"><button aria-label="Alejar">−</button><input type="range" min="0" max="200" value="100" aria-label="Zoom"><button aria-label="Acercar">+</button><output>100 %</output></div>
      </footer>
      <div class="task"><div class="search"></div><div class="app"></div><div class="clock">16:47</div></div>
    `;
  }
}
